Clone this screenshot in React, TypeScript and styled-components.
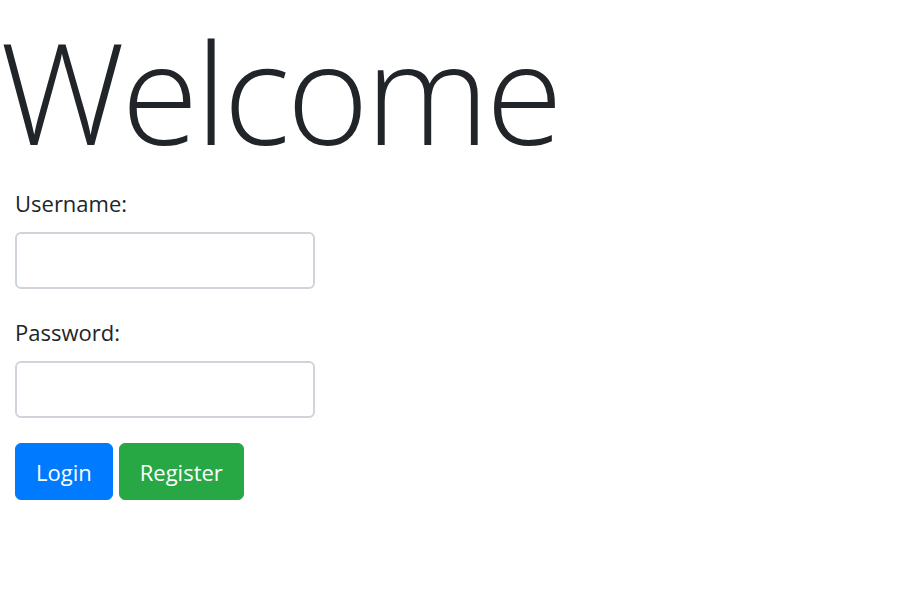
import React, { useState } from "react";
import styled, { createGlobalStyle } from "styled-components";

const GlobalStyle = createGlobalStyle`
  * {
    box-sizing: border-box;
  }
  body {
    margin: 0;
    background: #ffffff;
    color: #212529;
    font-family: "Open Sans", "Noto Sans", "Liberation Sans", sans-serif;
    font-size: 22px;
    line-height: 1.5;
  }
`;

const Page = styled.div`
  width: 100%;
  min-height: 100vh;
`;

const Title = styled.h1`
  margin: 0 0 10px;
  padding: 7px 0 0;
  font-size: 140px;
  font-weight: 300;
  line-height: 1.2;
  letter-spacing: -3.3px;
`;

const LoginForm = styled.form`
  display: flex;
  flex-direction: column;
  padding: 0 15px;
`;

const FormGroup = styled.div`
  display: flex;
  flex-direction: column;
  align-items: flex-start;
  margin-bottom: 25px;
`;

const Label = styled.label`
  display: block;
  margin-bottom: 11px;
  font-size: 22px;
  line-height: 36px;
`;

const Input = styled.input`
  width: 300px;
  height: 57px;
  padding: 9px 18px;
  font-family: inherit;
  font-size: 22px;
  color: #495057;
  background: #ffffff;
  border: 2px solid #ced4da;
  border-radius: 6px;
  outline: none;
`;

const ButtonRow = styled.div`
  display: flex;
  gap: 6px;
`;

const Button = styled.button<{ variant: "primary" | "success" }>`
  height: 57px;
  padding: 9px 20px;
  font-family: inherit;
  font-size: 22px;
  line-height: 36px;
  color: #ffffff;
  background-color: ${(p) => (p.variant === "primary" ? "#007bff" : "#28a745")};
  border: 1.5px solid ${(p) => (p.variant === "primary" ? "#007bff" : "#28a745")};
  border-radius: 6px;
  cursor: pointer;
`;

const App = () => {
  const [username, setUsername] = useState("");
  const [password, setPassword] = useState("");

  return (
    <Page>
      <GlobalStyle />
      <Title>Welcome</Title>
      <LoginForm onSubmit={(e) => e.preventDefault()}>
        <FormGroup>
          <Label htmlFor="username">Username:</Label>
          <Input
            id="username"
            type="text"
            value={username}
            onChange={(e) => setUsername(e.target.value)}
          />
        </FormGroup>
        <FormGroup>
          <Label htmlFor="password">Password:</Label>
          <Input
            id="password"
            type="password"
            value={password}
            onChange={(e) => setPassword(e.target.value)}
          />
        </FormGroup>
        <ButtonRow>
          <Button variant="primary" type="submit">
            Login
          </Button>
          <Button variant="success" type="button">
            Register
          </Button>
        </ButtonRow>
      </LoginForm>
    </Page>
  );
};

export default App;
